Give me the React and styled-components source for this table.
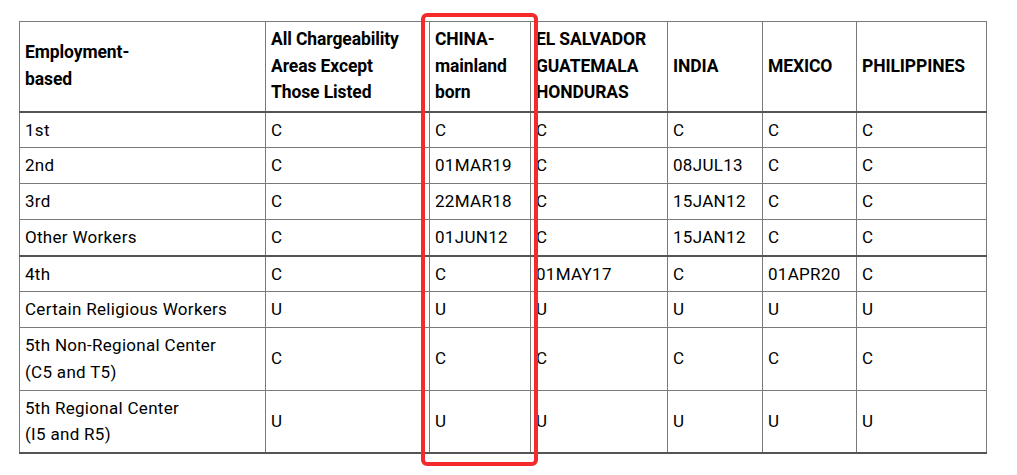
import React from 'react'
import styled, { createGlobalStyle } from 'styled-components'

const GlobalStyle = createGlobalStyle`
  html, body {
    margin: 0;
    background: #fff;
  }
  body {
    font-family: Roboto, "Liberation Sans", sans-serif;
    color: #000;
  }
`

const columns = [
  { width: 246, title: ['Employment-', 'based'] },
  { width: 164, title: ['All Chargeability', 'Areas Except', 'Those Listed'] },
  { width: 101, title: ['CHINA-', 'mainland', 'born'] },
  { width: 137, title: ['EL SALVADOR', 'GUATEMALA', 'HONDURAS'] },
  { width: 95, title: ['INDIA'] },
  { width: 94, title: ['MEXICO'] },
  { width: 130, title: ['PHILIPPINES'] },
]

const rows = [
  { label: ['1st'], cells: ['C', 'C', 'C', 'C', 'C', 'C'] },
  { label: ['2nd'], cells: ['C', '01MAR19', 'C', '08JUL13', 'C', 'C'] },
  { label: ['3rd'], cells: ['C', '22MAR18', 'C', '15JAN12', 'C', 'C'] },
  { label: ['Other Workers'], cells: ['C', '01JUN12', 'C', '15JAN12', 'C', 'C'] },
  { label: ['4th'], cells: ['C', 'C', '01MAY17', 'C', '01APR20', 'C'], strong: true },
  { label: ['Certain Religious Workers'], cells: ['U', 'U', 'U', 'U', 'U', 'U'] },
  { label: ['5th Non-Regional Center', '(C5 and T5)'], cells: ['C', 'C', 'C', 'C', 'C', 'C'] },
  { label: ['5th Regional Center', '(I5 and R5)'], cells: ['U', 'U', 'U', 'U', 'U', 'U'] },
]

const Lines = ({ lines }) =>
  lines.map((line, i) => (
    <React.Fragment key={i}>
      {i > 0 && <br />}
      {line}
    </React.Fragment>
  ))

const App = () => {
  return (
    <Page>
      <GlobalStyle />
      <Frame>
        <Table>
          <colgroup>
            {columns.map((col, i) => (
              <col key={i} style={{ width: col.width + 'px' }} />
            ))}
          </colgroup>
          <thead>
            <tr>
              {columns.map((col, i) => (
                <HeadCell key={i} $dark={i === 2 || i === 5}>
                  <Lines lines={col.title} />
                </HeadCell>
              ))}
            </tr>
          </thead>
          <tbody>
            {rows.map((row, r) => (
              <Row key={r} $strong={row.strong}>
                <Cell>
                  <Lines lines={row.label} />
                </Cell>
                {row.cells.map((value, c) => (
                  <Cell key={c} $dark={c === 1 || c === 4}>
                    {value}
                  </Cell>
                ))}
              </Row>
            ))}
          </tbody>
        </Table>
        <Highlight />
      </Frame>
    </Page>
  )
}

const Page = styled.div`
  min-height: 475px;
  box-sizing: border-box;
  padding: 21px 0 0 19px;
`
const Frame = styled.div`
  position: relative;
  width: max-content;
`
const Table = styled.table`
  border-collapse: collapse;
  table-layout: fixed;
  width: 967px;
  border-bottom: 2px solid #555;
`
const cellBase = `
  border: 1px solid #7a7a7a;
  padding: 4px 5px;
  line-height: 26.75px;
  text-align: left;
  vertical-align: middle;
  overflow: hidden;
  white-space: nowrap;
`
const HeadCell = styled.th`
  ${cellBase}
  padding: 4px 5px 5px;
  font-weight: 700;
  font-size: 17.5px;
  letter-spacing: -0.1px;
  line-height: 26.5px;
  border-bottom: 2px solid #555;
  border-left-color: ${(p) => (p.$dark ? '#444' : '#7a7a7a')};
`
const Row = styled.tr`
  ${(p) => p.$strong && 'border-top: 2px solid #555;'}
`
const Cell = styled.td`
  ${cellBase}
  font-size: 17px;
  letter-spacing: 0.3px;
  border-left-color: ${(p) => (p.$dark ? '#444' : '#7a7a7a')};
`
const Highlight = styled.div`
  position: absolute;
  left: 402px;
  top: -8px;
  width: 109px;
  height: 445px;
  border: 4px solid #f52a2a;
  border-radius: 6px;
  pointer-events: none;
`

export default App
